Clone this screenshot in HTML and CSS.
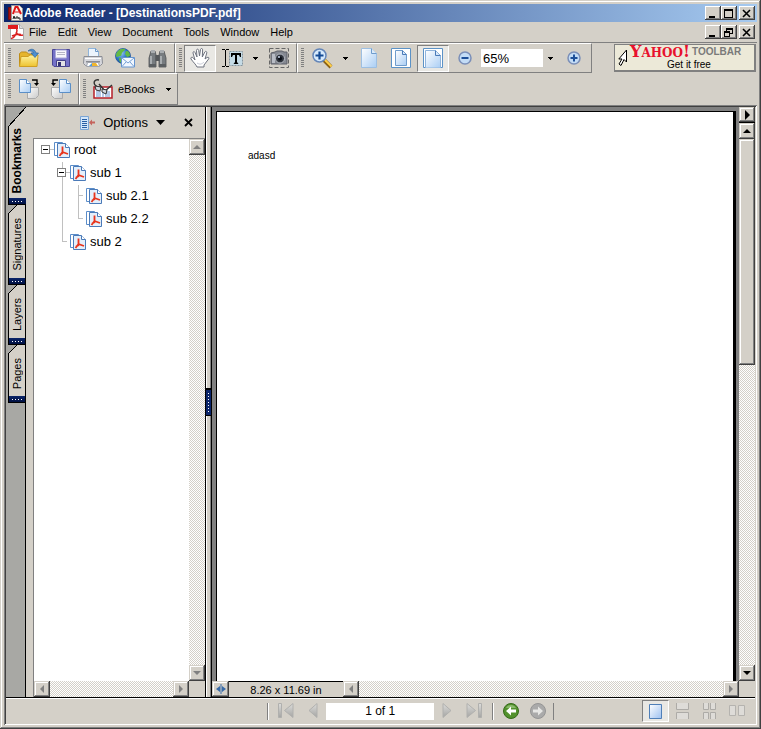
FILE: index.html
```
<!DOCTYPE html>
<html lang="en">
<head>
  <meta charset="UTF-8" />
  <meta name="viewport" content="width=device-width, initial-scale=1.0"/>
  <title>Adobe Reader - [DestinationsPDF.pdf]</title>
  <link rel="stylesheet" href="styles.css">
</head>
<body>

<svg class="defs" width="0" height="0" aria-hidden="true">
  <defs>
    <linearGradient id="g-page" x1="0" y1="0" x2="1" y2="1">
      <stop offset="0" stop-color="#ffffff"/><stop offset="1" stop-color="#a9cdf4"/>
    </linearGradient>
    <linearGradient id="g-view" x1="0" y1="0" x2="1" y2="1">
      <stop offset="0" stop-color="#ffffff"/><stop offset="1" stop-color="#9cc0f0"/>
    </linearGradient>
    <linearGradient id="g-grey" x1="0" y1="0" x2="1" y2="1">
      <stop offset="0" stop-color="#ffffff"/><stop offset="1" stop-color="#c9c9c9"/>
    </linearGradient>
    <linearGradient id="g-nav" x1="0" y1="0" x2="0" y2="1">
      <stop offset="0" stop-color="#dddddb"/><stop offset="1" stop-color="#a4a4a2"/>
    </linearGradient>
    <linearGradient id="g-folder" x1="0" y1="0" x2="0" y2="1">
      <stop offset="0" stop-color="#fff3a0"/><stop offset="1" stop-color="#edc32f"/>
    </linearGradient>
    <radialGradient id="g-globe" cx="0.35" cy="0.3" r="0.8">
      <stop offset="0" stop-color="#9fd0f5"/><stop offset="0.5" stop-color="#2f77c8"/><stop offset="1" stop-color="#0d3e8c"/>
    </radialGradient>
    <symbol id="bookmark" viewBox="0 0 16 16">
      <path d="M.5 .5h8v13h-8z" fill="#fff" stroke="#5b8dc9"/>
      <path d="M3.500 1.500h8l4 4v10h-12z" fill="#e4effb" stroke="#4a7ab8"/>
      <path d="M11.500 1.500v4h4" fill="#fff" stroke="#4a7ab8"/>
      <path d="M8.500 4.500v5.500L5.500 14M8.500 10l5.500 2M6 12.500l3-1.500" fill="none" stroke="#e8341c" stroke-width="1.800"/>
    </symbol>
    <symbol id="sheet" viewBox="0 0 16 20">
      <path d="M.5 .5h10l5 5v14H.5z" fill="url(#g-page)" stroke="#9dbfe2"/>
      <path d="M10.500 .5v5h5" fill="#dcebfa" stroke="#6f9ccc"/>
    </symbol>
  </defs>
</svg>

<div class="window">
  <header class="title-bar">
    <svg width="15" height="16" viewBox="0 0 15 16" aria-hidden="true">
      <path d="M.5 2.500h3v12h-3z" fill="#a81010" stroke="#701010"/>
      <path d="M3.500 .5h8l3 3v12h-11z" fill="#f7f4f0" stroke="#999"/>
      <path d="M5 9L7.500 2h2L13 9" fill="none" stroke="#df1515" stroke-width="2"/>
      <path d="M7 7h4" stroke="#df1515"/>
      <path d="M5 14l1-3 1 3M8 14v-2h2v2M11 12v2h2" fill="none" stroke="#222"/>
    </svg>
    <h1>Adobe Reader - [DestinationsPDF.pdf]</h1>
    <div class="window-buttons">
      <button class="win-button" aria-label="Minimize"><svg width="10" height="9"><path d="M1 7h6v2H1z"/></svg></button>
      <button class="win-button" aria-label="Maximize"><svg width="10" height="9"><path d="M0 0h9v9H0zM1 2v6h7V2z" fill-rule="evenodd"/></svg></button>
      <button class="win-button close" aria-label="Close"><svg width="10" height="9"><path d="M1 1l7 7M8 1L1 8" stroke="#000" stroke-width="1.600"/></svg></button>
    </div>
  </header>

  <nav class="menu-bar">
    <svg width="17" height="16" viewBox="0 0 17 16" aria-hidden="true">
      <path d="M2.500 .5h9l4 4v11h-13z" fill="#fff" stroke="#aaa"/>
      <path d="M11.500 .5v4h4" fill="#ddd" stroke="#aaa"/>
      <path d="M0 1h10v4H0z" fill="#e01c1c"/>
      <path d="M8 5c1.500 0 1 3 0 5s-3 4.500-5 4.500M8 8c1 2.500 4 4 7 3M4 12c3-1.500 6-2 9-1.500" fill="none" stroke="#d82020" stroke-width="1.500"/>
    </svg>
    <button class="menu">File</button>
    <button class="menu">Edit</button>
    <button class="menu">View</button>
    <button class="menu">Document</button>
    <button class="menu">Tools</button>
    <button class="menu">Window</button>
    <button class="menu">Help</button>
    <div class="window-buttons">
      <button class="win-button" aria-label="Minimize document"><svg width="10" height="9"><path d="M1 7h6v2H1z"/></svg></button>
      <button class="win-button" aria-label="Restore document"><svg width="10" height="9"><path d="M2 0h7v6H6v3H0V3h2zM3 2v1h3v2h2V2zM1 5v3h4V5z" fill-rule="evenodd"/></svg></button>
      <button class="win-button close" aria-label="Close document"><svg width="10" height="9"><path d="M1 1l7 7M8 1L1 8" stroke="#000" stroke-width="1.600"/></svg></button>
    </div>
  </nav>

  <div class="toolbar-row">
    <div class="toolbar">
      <span class="grip"></span>
      <button class="tool" aria-label="Open">
        <svg width="20" height="20" viewBox="0 0 20 20">
          <path d="M.5 18V5.500l2-1.500h5l2 2h8V18z" fill="#e6b52c" stroke="#bd8c18"/>
          <path d="M.5 18.500l1.500-10h7l2-1.500h8l-1 11.500z" fill="url(#g-folder)" stroke="#cf9e22"/>
          <path d="M9 3c3-3 7-2 8 2h2.500L16 9.500 12 5h2.500c-1-2-3-2.500-5.500-2z" fill="#4e8fd0" stroke="#2f649c" stroke-width=".7"/>
        </svg>
      </button>
      <button class="tool" aria-label="Save a copy">
        <svg width="18" height="18" viewBox="0 0 18 18">
          <path d="M.5 .5h17v17H2L.5 16z" fill="#7572c8" stroke="#4a4794"/>
          <path d="M3.500 1h11v8h-11z" fill="#f7f7fb" stroke="#aaa9d8"/>
          <path d="M5 3.500h8M5 5.500h8" stroke="#b6b6c6"/>
          <path d="M4.500 11.500h9v6h-9z" fill="#e2e2e6" stroke="#45428a"/>
          <path d="M6 13h3v4H6z" fill="#343173"/>
        </svg>
      </button>
      <button class="tool" aria-label="Print">
        <svg width="20" height="20" viewBox="0 0 20 20">
          <path d="M5.500 9V.5h7l3 3V9z" fill="#edf5fd" stroke="#8fb3d9"/>
          <path d="M12.500 .5v3h3" fill="none" stroke="#6d9acb"/>
          <path d="M1 8.500h18l.5 7-2 2h-15l-2-2z" fill="#d6d7dc" stroke="#8b8d94"/>
          <path d="M2 10.500h16" stroke="#fff"/>
          <path d="M3 13h14v1.500H3z" fill="#8a8c92"/>
          <path d="M4.500 14.500h11l1 4h-13z" fill="#fff" stroke="#a0a4ad"/>
          <path d="M6 18l3-3 3 3H6z" fill="#4b9be0"/><path d="M9 15h4l2 3H9z" fill="#f0b52c"/>
        </svg>
      </button>
      <button class="tool" aria-label="Email">
        <svg width="20" height="20" viewBox="0 0 20 20">
          <circle cx="8" cy="8" r="7.500" fill="url(#g-globe)" stroke="#22589c" stroke-width=".8"/>
          <path d="M3 3c2-2 5-2.500 7-2 0 2-2 2-3 4s0 3-2 3-3 2-4 0c0-2 .5-3.500 2-5zM11 3c3 0 4 2 4 5l-3 1-2-3zM4 10c3-1 5 1 4 5-3 0-4-2-4-5z" fill="#63ba45"/>
          <path d="M6.500 9.500h13v9.500h-13z" fill="#f1f7ff" stroke="#6594cf"/>
          <path d="M7 10l6 5 6-5M7 18.500l4-4.500M19 18.500L15 14" fill="none" stroke="#75a0d4"/>
        </svg>
      </button>
      <button class="tool" aria-label="Search">
        <svg width="19" height="19" viewBox="0 0 19 19">
          <path d="M3 2h4l1 4v12H1V9zM16 2h-4l-1 4v12h7V9z" fill="#777c80" stroke="#4c4f52" stroke-width=".8"/>
          <path d="M7.500 6h4v6h-4z" fill="#55585b"/>
          <path d="M3 1h4v3H3zM12 1h4v3h-4z" fill="#a9adb0"/>
          <path d="M3 7v10M13 7v10" stroke="#b9bdc0" stroke-width="1.500"/>
          <path d="M1 15h7v3H1zM11 15h7v3h-7z" fill="#5b5f62"/>
        </svg>
      </button>
    </div>
    <div class="toolbar">
      <span class="grip"></span>
      <button class="tool pressed" aria-label="Hand tool" aria-pressed="true">
        <svg width="20" height="20" viewBox="0 0 20 20">
          <path d="M7 19c-1-2.500-4-5-6-8-.8-1.500 1-2.500 2.200-1.200L5 12 3 5C2.700 3.500 4.500 3 5 4.500L7 9 6.500 2.500c0-1.800 2-1.800 2.200 0L9.500 8l1-6.500c.3-1.500 2.200-1.300 2.100.3L12.300 9l2.500-5c.7-1.300 2.400-.5 2 .9L15 11l2-1.500c1.500-.8 2.500.3 1.600 1.500L14 17v2z" fill="#fff" stroke="#6e737f"/>
          <path d="M7 15c3 2 5 1 7-1" fill="none" stroke="#c7cbd6"/>
        </svg>
      </button>
      <button class="tool" aria-label="Select text">
        <svg width="21" height="20" viewBox="0 0 21 20">
          <path d="M7.500 3.500h13v14h-13z" fill="#c5dbe6" stroke="#8796a0" stroke-dasharray="2 1"/>
          <path d="M0 1.500h3M4 1.500h3M0 18.500h3M4 18.500h3M3.500 2v16" stroke="#000"/>
          <path d="M9 5h10v4h-1l-1-2h-2v7l1.500 2h-5l1.500-2V7h-2l-1 2H9z"/>
        </svg>
      </button>
      <button class="drop" aria-label="Text selection options"></button>
      <button class="tool" aria-label="Snapshot">
        <svg width="20" height="20" viewBox="0 0 20 20">
          <path d="M.5 .5h19v19H.5z" fill="none" stroke="#666" stroke-dasharray="4 2"/>
          <path d="M2 5l4-1 2-1h5l2 1h3v12H2z" fill="#868a93" stroke="#5c5f68"/>
          <path d="M3 6h3v9H3z" fill="#b8bcc5"/>
          <circle cx="11" cy="10.500" r="4.500" fill="#2e333c" stroke="#b9bdc7"/>
          <circle cx="11" cy="10.500" r="2" fill="#090d15"/><circle cx="10" cy="9" r="1" fill="#cdd9ef"/>
        </svg>
      </button>
    </div>
    <div class="toolbar">
      <span class="grip"></span>
      <button class="tool" aria-label="Zoom in tool">
        <svg width="21" height="21" viewBox="0 0 21 21">
          <path d="M12 12l7 7" stroke="#8b6113" stroke-width="4"/>
          <path d="M12.500 11.500l7 7" stroke="#ffcf4a" stroke-width="2"/>
          <circle cx="7.500" cy="7.500" r="6.500" fill="#d5e9fc" stroke="#6486b8" stroke-width="1.500"/>
          <path d="M3.500 7.500h8M7.500 3.500v8" stroke="#124993" stroke-width="2.200"/>
        </svg>
      </button>
      <button class="drop" aria-label="Zoom tool options"></button>
      <button class="tool" aria-label="Actual size"><svg width="16" height="20"><use href="#sheet"/></svg></button>
      <button class="tool" aria-label="Fit page">
        <svg width="20" height="20" viewBox="0 0 20 20"><path d="M.5 .5h19v19H.5z" fill="#fff" stroke="#5c92c6"/><path d="M4.500 2.500h7l4 4v11h-11z" fill="url(#g-page)" stroke="#6f9ccc"/><path d="M11.500 2.500v4h4" fill="none" stroke="#4a7ab8"/></svg>
      </button>
      <button class="tool pressed" aria-label="Fit width" aria-pressed="true">
        <svg width="20" height="20" viewBox="0 0 20 20"><path d="M.5 .5h19v19H.5z" fill="#fff" stroke="#5c92c6"/><path d="M2.500 2.500h10l5 5V20h-15z" fill="url(#g-page)" stroke="#8fb4dc"/><path d="M12.500 2.500v5h5" fill="none" stroke="#4a7ab8"/></svg>
      </button>
      <button class="tool" aria-label="Zoom out">
        <svg width="14" height="14" viewBox="0 0 14 14"><circle cx="7" cy="7" r="6" fill="#c3dcf6" stroke="#7b8fb8" stroke-width="1.500"/><path d="M3.500 7h7" stroke="#1d4f99" stroke-width="2"/></svg>
      </button>
      <input class="zoom-value" type="text" value="65%" aria-label="Zoom level">
      <button class="drop" aria-label="Zoom levels"></button>
      <button class="tool" aria-label="Zoom in">
        <svg width="14" height="14" viewBox="0 0 14 14"><circle cx="7" cy="7" r="6" fill="#c3dcf6" stroke="#7b8fb8" stroke-width="1.500"/><path d="M3.500 7h7M7 3.500v7" stroke="#1d4f99" stroke-width="2"/></svg>
      </button>
    </div>
    <a class="banner" href="#yahoo">
      <svg width="10" height="18" viewBox="0 0 10 18" aria-hidden="true"><path d="M8.500 1v12L6 10.500 3 16.500 1 15l3-5H.8z" fill="#fff" stroke="#000"/></svg>
      <span class="banner-text">
        <span class="banner-top"><b class="yahoo">Y<small>AHOO</small>!</b><b class="brand">TOOLBAR</b></span>
        <span class="banner-free">Get it free</span>
      </span>
    </a>
  </div>

  <div class="toolbar-row second">
    <div class="toolbar">
      <span class="grip"></span>
      <button class="tool" aria-label="Rotate clockwise">
        <svg width="20" height="20" viewBox="0 0 20 20">
          <path d="M8.500 8.500h11v8l-3 3h-8z" fill="url(#g-grey)" stroke="#aaa"/>
          <path d="M.5 .5h7l4 4v9H.5z" fill="url(#g-page)" stroke="#5b8fc7"/><path d="M7.500 .5v4h4" fill="#fff" stroke="#5b8fc7"/>
          <path d="M13 1h5v4" fill="none" stroke="#000" stroke-width="1.400"/><path d="M15 4h5l-2.500 3z"/>
        </svg>
      </button>
      <button class="tool" aria-label="Rotate counterclockwise">
        <svg width="20" height="20" viewBox="0 0 20 20">
          <path d="M.5 8.500h11v11h-8l-3-3z" fill="url(#g-grey)" stroke="#aaa"/>
          <path d="M8.500 .5h7l4 4v9h-11z" fill="url(#g-page)" stroke="#5b8fc7"/><path d="M15.500 .5v4h4" fill="#fff" stroke="#5b8fc7"/>
          <path d="M7 1H2v4" fill="none" stroke="#000" stroke-width="1.400"/><path d="M0 4h5L2.500 7z"/>
        </svg>
      </button>
    </div>
    <div class="toolbar">
      <span class="grip"></span>
      <button class="ebooks-button">
        <svg width="20" height="20" viewBox="0 0 20 20" aria-hidden="true">
          <path d="M1 8h18v11H1z" fill="#fff" stroke="#b51f2a" stroke-width="1.500"/>
          <path d="M10 10v8M3 13h5M3 15h5M3 17h5M12 13h5M12 15h5M12 17h5" stroke="#6a93d0"/>
          <path d="M2 6C0 3 2 0 6 1M2 6l5 4M6 5l6 7 7-6" fill="none" stroke="#333" stroke-width="1.400"/>
          <path d="M2 7l6 1-1 4-4-1zM9 10l5 1-1 4-4-2z" fill="#cfd6de" stroke="#333"/>
        </svg>
        eBooks
      </button>
      <button class="drop" aria-label="eBooks menu"></button>
    </div>
  </div>

  <div class="frame">
    <main class="workspace">
      <div class="tab-strip">
        <button class="tab active"><span>Bookmarks</span></button>
        <button class="tab"><span>Signatures</span></button>
        <button class="tab"><span>Layers</span></button>
        <button class="tab"><span>Pages</span></button>
      </div>

      <section class="panel">
        <div class="panel-header">
          <button class="options">
            <svg width="15" height="14" viewBox="0 0 15 14" aria-hidden="true">
              <path d="M.5 .5h8v13h-8z" fill="#d4e7fa" stroke="#7ba5d5"/>
              <path d="M2 3.500h5M2 5.500h5M2 7.500h5M2 9.500h5M2 11.500h5" stroke="#285fa5"/>
              <path d="M9 6.500l3-3v2h3v2h-3v2z" fill="#c5645d"/>
            </svg>
            Options
            <svg width="9" height="5" aria-hidden="true"><path d="M0 0h9L4.500 5z"/></svg>
          </button>
          <button class="panel-close" aria-label="Close panel"><svg width="9" height="9"><path d="M1 1l7 7M8 1L1 8" stroke="#000" stroke-width="1.800"/></svg></button>
        </div>
        <div class="tree-area">
          <ul class="tree">
            <li>
              <div class="node"><button class="expander" aria-label="Collapse root"></button><svg width="16" height="16"><use href="#bookmark"/></svg><a href="#root">root</a></div>
              <ul class="branch">
                <li>
                  <div class="node"><button class="expander" aria-label="Collapse sub 1"></button><svg width="16" height="16"><use href="#bookmark"/></svg><a href="#sub-1">sub 1</a></div>
                  <ul class="branch">
                    <li><div class="node"><span class="elbow"></span><svg width="16" height="16"><use href="#bookmark"/></svg><a href="#sub-2-1">sub 2.1</a></div></li>
                    <li><div class="node"><span class="elbow"></span><svg width="16" height="16"><use href="#bookmark"/></svg><a href="#sub-2-2">sub 2.2</a></div></li>
                  </ul>
                </li>
                <li><div class="node"><span class="elbow"></span><svg width="16" height="16"><use href="#bookmark"/></svg><a href="#sub-2">sub 2</a></div></li>
              </ul>
            </li>
          </ul>
          <div class="scroll vertical disabled">
            <button class="scroll-button" aria-label="Scroll up"><svg width="8" height="8"><path d="M4 2l4 4H0z"/></svg></button>
            <button class="scroll-button" aria-label="Scroll down"><svg width="8" height="8"><path d="M4 6l4-4H0z"/></svg></button>
          </div>
          <div class="scroll horizontal disabled">
            <button class="scroll-button" aria-label="Scroll left"><svg width="8" height="8"><path d="M2 4l4-4v8z"/></svg></button>
            <button class="scroll-button" aria-label="Scroll right"><svg width="8" height="8"><path d="M6 4L2 0v8z"/></svg></button>
          </div>
        </div>
      </section>

      <div class="splitter"><span class="handle"></span></div>

      <section class="document">
        <div class="canvas"><article class="page">adasd</article></div>
        <div class="doc-right">
          <button class="scroll-button expand" aria-label="Document menu"><svg width="8" height="10"><path d="M2 0l5 5-5 5z"/></svg></button>
          <div class="scroll vertical">
            <button class="scroll-button" aria-label="Scroll up"><svg width="8" height="8"><path d="M4 2l4 4H0z"/></svg></button>
            <div class="track"><span class="thumb"></span></div>
            <button class="scroll-button" aria-label="Scroll down"><svg width="8" height="8"><path d="M4 6l4-4H0z"/></svg></button>
          </div>
        </div>
        <div class="doc-bottom">
          <button class="scroll-button toggle" aria-label="Toggle pane"><svg width="10" height="10"><path d="M0 5l4-3v6zM10 5L6 2v6zM4.500 0h1v10h-1z" fill="#376aa8"/></svg></button>
          <span class="page-size">8.26 x 11.69 in</span>
          <div class="scroll horizontal disabled">
            <button class="scroll-button" aria-label="Scroll left"><svg width="8" height="8"><path d="M2 4l4-4v8z"/></svg></button>
            <button class="scroll-button" aria-label="Scroll right"><svg width="8" height="8"><path d="M6 4L2 0v8z"/></svg></button>
          </div>
        </div>
      </section>
    </main>

    <footer class="status-bar">
      <div class="page-nav">
        <button class="nav" aria-label="First page"><svg width="16" height="16"><path d="M.5 .5h3v14h-3zM15 .5v14L6.500 7.500z" fill="url(#g-nav)" stroke="#b0b0ae"/></svg></button>
        <button class="nav" aria-label="Previous page"><svg width="10" height="16"><path d="M9 .5v14L1 7.500z" fill="url(#g-nav)" stroke="#b0b0ae"/></svg></button>
        <input class="page-number" type="text" value="1 of 1" aria-label="Page">
        <button class="nav" aria-label="Next page"><svg width="10" height="16"><path d="M1 .5v14l8-7z" fill="url(#g-nav)" stroke="#b0b0ae"/></svg></button>
        <button class="nav" aria-label="Last page"><svg width="16" height="16"><path d="M12.500 .5h3v14h-3zM1 .5v14l8.500-7z" fill="url(#g-nav)" stroke="#b0b0ae"/></svg></button>
      </div>
      <div class="history">
        <button class="nav" aria-label="Previous view"><svg width="16" height="16"><circle cx="8" cy="8" r="7.500" fill="#53912d" stroke="#356b1a"/><path d="M3 5c2-4 8-4 10 0z" fill="#8aba6b"/><path d="M3 8l5-4.500V6.500h5v3H8v3z" fill="#fff"/></svg></button>
        <button class="nav" aria-label="Next view"><svg width="16" height="16"><circle cx="8" cy="8" r="7.500" fill="#aaa" stroke="#959595"/><path d="M13 8L8 3.500v3H3v3h5v3z" fill="#e6e6e4"/></svg></button>
      </div>
      <div class="views">
        <button class="view pressed" aria-label="Single page" aria-pressed="true"><svg width="13" height="15"><path d="M.5 .5h12v14H.5z" fill="url(#g-view)" stroke="#4f7fb8"/></svg></button>
        <button class="view" aria-label="Continuous"><svg width="13" height="16"><path d="M.5 0v6.500h12V0M.5 16V9.500h12V16" fill="#dedcd8" stroke="#adaba7"/></svg></button>
        <button class="view" aria-label="Continuous facing"><svg width="13" height="16"><path d="M.5 0v6.500h5V0M7.500 0v6.500h5V0M.5 16V9.500h5V16M7.500 16V9.500h5V16" fill="#dedcd8" stroke="#adaba7"/></svg></button>
        <button class="view" aria-label="Facing"><svg width="16" height="12"><path d="M.5 .5h6v10h-6zM9.500 .5h6v10h-6z" fill="#dedcd8" stroke="#b5b3af"/></svg></button>
      </div>
    </footer>
  </div>
</div>

</body>
</html>
```
FILE: styles.css
```
* {
  box-sizing: border-box;
}

body {
  margin: 0;
  font-family: "Liberation Sans", Arial, sans-serif;
  font-size: 11px;
  color: #000;
  background: #d4d0c8;
}

button,
input {
  margin: 0;
  padding: 0;
  border: none;
  border-radius: 0;
  font: inherit;
  color: inherit;
  background: none;
}

svg {
  display: block;
  flex: none;
}

a {
  color: inherit;
  text-decoration: none;
}

.defs {
  position: absolute;
}

.window {
  display: flex;
  flex-direction: column;
  height: 100vh;
  padding: 4px;
  background: #d4d0c8;
  box-shadow: inset -1px -1px #404040, inset 1px 1px #d4d0c8, inset -2px -2px #808080, inset 2px 2px #fff;
}

/* title and menus */
.title-bar {
  display: flex;
  align-items: center;
  height: 18px;
  padding: 0 2px 0 4px;
  background: linear-gradient(to right, #0a246a, #a6caf0);
}

.title-bar h1 {
  margin: 0;
  padding-left: 1px;
  font: bold 12px "Liberation Sans", Arial, sans-serif;
  color: #fff;
  white-space: nowrap;
}

.window-buttons {
  display: flex;
  margin-left: auto;
}

.win-button {
  display: flex;
  align-items: center;
  justify-content: center;
  width: 16px;
  height: 14px;
  background: #d4d0c8;
  box-shadow: inset -1px -1px #404040, inset 1px 1px #fff, inset -2px -2px #808080;
}

.close {
  margin-left: 2px;
}

.menu-bar {
  display: flex;
  align-items: center;
  height: 20px;
  padding: 0 2px 0 4px;
}

.menu {
  height: 18px;
  padding: 0 4px;
}

.menu + .menu {
  margin-left: 3px;
}

/* toolbars */
.toolbar-row {
  display: flex;
  height: 31px;
  border-top: 1px solid #808080;
}

.toolbar-row.second {
  height: 32px;
  border-top: none;
}

.toolbar {
  display: flex;
  align-items: center;
  padding: 0 1px 0 2px;
  border: 1px solid;
  border-color: #fff #808080 #808080 #fff;
}

.grip {
  width: 3px;
  height: 20px;
  margin: 0 2px 0 1px;
  background: repeating-linear-gradient(#808080 0 1px, #d4d0c8 1px 2px);
}

.tool {
  display: flex;
  align-items: center;
  justify-content: center;
  width: 32px;
  height: 27px;
}

.pressed {
  background: #e9e8e4;
  border: 1px solid;
  border-color: #808080 #fff #fff #808080;
}

.drop {
  width: 15px;
  height: 20px;
  background: linear-gradient(#000, #000) 50% 9px / 5px 1px no-repeat,
    linear-gradient(#000, #000) 50% 10px / 3px 1px no-repeat,
    linear-gradient(#000, #000) 50% 11px / 1px 1px no-repeat;
}

.zoom-value {
  width: 62px;
  height: 18px;
  padding-left: 2px;
  font-size: 13px;
  background: #fff;
}

.banner {
  display: flex;
  align-items: center;
  width: 142px;
  margin: 1px 1px 1px auto;
  padding-left: 3px;
  background: #ece9d8;
  border: solid #808080;
  border-width: 1px 2px 2px 1px;
}

.banner-text {
  display: flex;
  flex-direction: column;
  flex: 1;
}

.banner-top {
  display: flex;
  align-items: center;
  height: 14px;
  padding-left: 2px;
}

.yahoo {
  font: bold 16px "DejaVu Serif", serif;
  line-height: 14px;
  color: #e8112d;
}

.yahoo small {
  font-size: 12px;
}

.brand {
  margin-left: 2px;
  font-size: 10px;
  line-height: 12px;
  color: #7a7a7a;
}

.banner-free {
  padding-left: 39px;
  font-size: 10px;
  line-height: 11px;
}

.ebooks-button {
  display: flex;
  align-items: center;
  gap: 5px;
  padding: 0 6px 0 5px;
}

/* sunken frame round the workspace */
.frame {
  display: flex;
  flex: 1;
  flex-direction: column;
  min-height: 0;
  padding: 2px;
  box-shadow: inset 1px 1px #808080, inset -1px -1px #fff, inset 2px 2px #404040;
}

.workspace {
  display: flex;
  flex: 1;
  min-height: 0;
  border-bottom: 1px solid #000;
}

.tab-strip {
  display: flex;
  flex: none;
  flex-direction: column;
  width: 20px;
  padding-left: 2px;
  background: #a8a8a4;
  border-right: 1px solid #000;
}

.tab {
  display: flex;
  align-items: center;
  justify-content: center;
  padding: 13px 0 14px;
  background:
    repeating-linear-gradient(to right, #fff 0 1px, transparent 1px 3px) 4px calc(100% - 3px) / 10px 1px no-repeat,
    linear-gradient(#000, #000) 0 100% / 100% 1px no-repeat,
    linear-gradient(#0a246a, #001040) 1px calc(100% - 1px) / 100% 6px no-repeat,
    linear-gradient(to bottom right, #a8a8a4 46%, #000 46% 54%, #d4d0c8 54%) 0 0 / 9px 9px no-repeat,
    linear-gradient(#000, #000) 0 9px / 1px 100% no-repeat,
    #d4d0c8;
}

.tab span {
  writing-mode: vertical-rl;
  transform: rotate(180deg);
}

.tab.active {
  margin-right: -1px;
  padding-top: 21px;
  padding-bottom: 12px;
  font-size: 12px;
  font-weight: bold;
  background:
    repeating-linear-gradient(to right, #fff 0 1px, transparent 1px 3px) 4px calc(100% - 3px) / 10px 1px no-repeat,
    linear-gradient(#000, #000) 0 100% / 100% 1px no-repeat,
    linear-gradient(#0a246a, #001040) 1px calc(100% - 1px) / 100% 6px no-repeat,
    linear-gradient(to bottom right, #a8a8a4 48%, #000 48% 52%, #d4d0c8 52%) 0 0 / 18px 20px no-repeat,
    linear-gradient(#000, #000) 0 20px / 1px 100% no-repeat,
    #d4d0c8;
}

.panel {
  display: flex;
  flex: none;
  flex-direction: column;
  width: 179px;
  padding-left: 7px;
}

.panel-header {
  display: flex;
  align-items: center;
  justify-content: flex-end;
  height: 31px;
  padding-right: 12px;
}

.options {
  display: flex;
  align-items: center;
  gap: 8px;
  font-size: 13px;
}

.panel-close {
  margin-left: 19px;
}

.tree-area {
  display: grid;
  flex: 1;
  grid-template: 1fr 16px / 1fr 16px;
  border: solid #808080;
  border-width: 1px 0 0 1px;
}

.tree,
.branch {
  margin: 0;
  padding: 0;
  list-style: none;
}

.tree {
  padding-left: 7px;
  background: #fff;
  font-size: 13px;
}

.branch {
  margin-left: 16px;
  background: linear-gradient(#c0c0c0, #c0c0c0) 5px 0 / 1px calc(100% - 12px) no-repeat;
}

.node {
  display: flex;
  align-items: center;
  height: 23px;
  padding-bottom: 2px;
}

.node a {
  margin-left: 4px;
}

.expander {
  width: 13px;
  height: 9px;
  background:
    linear-gradient(#000, #000) 2px 4px / 5px 1px no-repeat,
    linear-gradient(#fff, #fff) 1px 1px / 7px 7px no-repeat,
    linear-gradient(#808080, #808080) 0 0 / 9px 9px no-repeat,
    linear-gradient(#c0c0c0, #c0c0c0) 9px 4px / 4px 1px no-repeat;
}

.elbow {
  width: 13px;
  height: 1px;
  background: linear-gradient(#c0c0c0, #c0c0c0) 5px 0 / 5px 1px no-repeat;
}

/* scroll bars */
.scroll {
  display: flex;
  justify-content: space-between;
  background: repeating-conic-gradient(#fff 0 25%, #d4d0c8 0 50%) 0 0 / 2px 2px;
}

.vertical {
  flex-direction: column;
}

.scroll-button {
  display: flex;
  flex: none;
  align-items: center;
  justify-content: center;
  width: 16px;
  height: 16px;
  background: #d4d0c8;
  box-shadow: inset -1px -1px #404040, inset 1px 1px #d4d0c8, inset -2px -2px #808080, inset 2px 2px #fff;
}

.disabled .scroll-button {
  fill: #808080;
}

.track {
  flex: 1;
}

.thumb {
  display: block;
  height: 43%;
  background: #d4d0c8;
  box-shadow: inset -1px -1px #404040, inset 1px 1px #d4d0c8, inset -2px -2px #808080, inset 2px 2px #fff;
}

.splitter {
  display: flex;
  flex: none;
  align-items: center;
  width: 7px;
  border: solid #000;
  border-width: 0 1px;
  box-shadow: inset 1px 0 #fff, inset -1px 0 #808080;
}

.handle {
  width: 5px;
  height: 28px;
  background:
    repeating-linear-gradient(#fff 0 1px, transparent 1px 3px) 2px 3px / 1px 19px no-repeat,
    #0a246a;
  border: solid #000;
  border-width: 2px 0 1px;
}

.document {
  display: grid;
  flex: 1;
  grid-template: 1fr 16px / 1fr 16px;
  min-width: 0;
}

.canvas {
  display: flex;
  padding: 4px 3px 0 4px;
  background: #808080;
}

.page {
  flex: 1;
  padding: 38px 31px;
  font-size: 10px;
  background: #fff;
  border: solid #000;
  border-width: 1px 3px 0 1px;
}

.doc-right {
  display: flex;
  flex-direction: column;
}

.doc-right .scroll {
  flex: 1;
}

.expand {
  border-bottom: 1px solid #000;
}

.doc-bottom {
  display: flex;
}

.doc-bottom .scroll {
  flex: 1;
}

.toggle {
  width: 17px;
}

.page-size {
  width: 114px;
  border-top: 1px solid #000;
  line-height: 16px;
  text-align: center;
}

/* status bar */
.status-bar {
  display: flex;
  align-items: center;
  height: 25px;
  padding-right: 5px;
  border-top: 1px solid #fff;
}

.status-bar::before {
  content: "";
  flex: 4;
}

.page-nav,
.history {
  display: flex;
  align-items: center;
  height: 17px;
  border-left: 1px solid #808080;
  box-shadow: inset 1px 0 #fff;
}

.page-nav {
  gap: 8px;
  padding: 0 10px;
}

.nav + .nav {
  margin-left: 6px;
}

.page-number {
  width: 108px;
  height: 17px;
  font-size: 12px;
  text-align: center;
  background: #fff;
}

.history {
  gap: 5px;
  padding: 0 7px 0 10px;
  border-right: 1px solid #808080;
}

.views {
  display: flex;
  flex: 3;
  justify-content: flex-end;
}

.view {
  display: flex;
  align-items: center;
  justify-content: center;
  width: 27px;
  height: 22px;
}
```
